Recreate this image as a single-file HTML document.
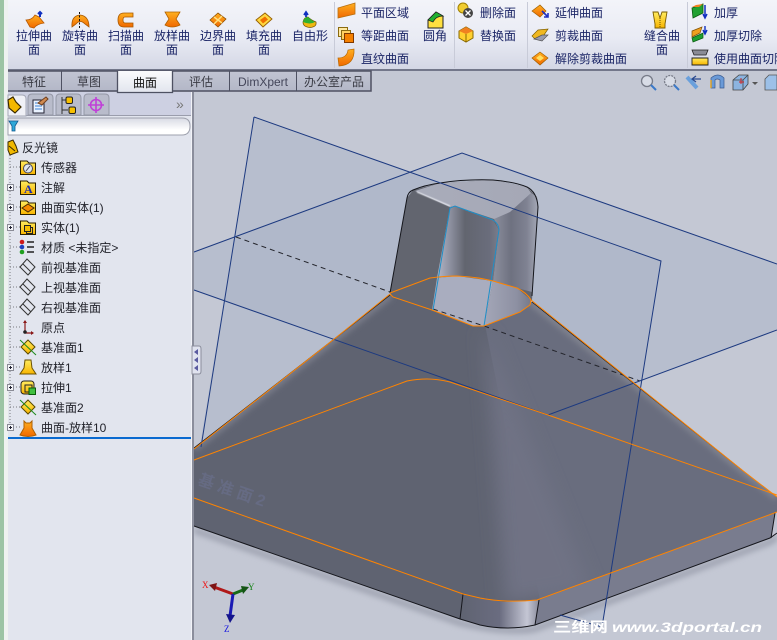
<!DOCTYPE html>
<html><head><meta charset="utf-8">
<style>
html,body{margin:0;padding:0;background:#c4c8d4;overflow:hidden}
svg{display:block}
text{font-family:"WenQuanYi Zen Hei","Liberation Sans","Noto Sans CJK SC",sans-serif;font-size:12px}
.r{fill:#1b2566;text-anchor:middle}
.l{fill:#1b2566}
.t{fill:#22232b}
.tb{fill:#3a3b44;text-anchor:middle}
</style></head><body>
<svg xmlns="http://www.w3.org/2000/svg" width="777" height="640" viewBox="0 0 777 640">
<defs>
<linearGradient id="rib" x1="0" y1="0" x2="0" y2="1"><stop offset="0" stop-color="#f3f4f9"/><stop offset=".55" stop-color="#e9ebf4"/><stop offset="1" stop-color="#d4d7e5"/></linearGradient>
<linearGradient id="tabg" x1="0" y1="0" x2="0" y2="1"><stop offset="0" stop-color="#c2c5d3"/><stop offset="1" stop-color="#b3b7c7"/></linearGradient>
<linearGradient id="act" x1="0" y1="0" x2="0" y2="1"><stop offset="0" stop-color="#fafbfd"/><stop offset="1" stop-color="#e2e5ee"/></linearGradient>
<linearGradient id="or" x1="0" y1="0" x2="0" y2="1"><stop offset="0" stop-color="#ffb020"/><stop offset="1" stop-color="#f06800"/></linearGradient>
<linearGradient id="ye" x1="0" y1="0" x2="0" y2="1"><stop offset="0" stop-color="#ffec60"/><stop offset="1" stop-color="#f8b400"/></linearGradient>
<linearGradient id="filt" x1="0" y1="0" x2="0" y2="1"><stop offset="0" stop-color="#d8dae4"/><stop offset=".7" stop-color="#ffffff"/></linearGradient>
<linearGradient id="mid" x1="0" y1="0" x2="1" y2="0"><stop offset="0" stop-color="#b4b6c6"/><stop offset=".2" stop-color="#8f92a2"/><stop offset=".45" stop-color="#62656f"/><stop offset=".85" stop-color="#6a6d7c"/><stop offset="1" stop-color="#7a7d8c"/></linearGradient>
<linearGradient id="rgt" x1="0" y1="0" x2="1" y2="0"><stop offset="0" stop-color="#8d909e"/><stop offset=".4" stop-color="#6e7180"/><stop offset=".75" stop-color="#7f8292"/><stop offset="1" stop-color="#a5a8b6"/></linearGradient>
<linearGradient id="rl" x1="0" y1="0" x2="1" y2="0"><stop offset="0" stop-color="#a4a7b8"/><stop offset=".7" stop-color="#8d90a2"/><stop offset="1" stop-color="#767989"/></linearGradient>
<linearGradient id="top" x1="0" y1="0" x2="1" y2="0"><stop offset="0" stop-color="#a9acba"/><stop offset="1" stop-color="#a5a8b6"/></linearGradient>
<linearGradient id="cor" x1="0" y1="0" x2="1" y2="0"><stop offset="0" stop-color="#5f6371"/><stop offset=".5" stop-color="#6a6c80"/><stop offset=".85" stop-color="#c4c6d4"/><stop offset="1" stop-color="#8a8c9c"/></linearGradient>
<filter id="b3" x="-20%" y="-20%" width="140%" height="140%"><feGaussianBlur stdDeviation="3"/></filter>
<filter id="b9" x="-30%" y="-30%" width="160%" height="160%"><feGaussianBlur stdDeviation="9"/></filter>
<filter id="b05"><feGaussianBlur stdDeviation=".5"/></filter>
<clipPath id="bodyc"><path d="M194,448 L333,340 L390,295 L532,302 L742,470 L777,497 L777,533 L770,538 L535,625 Q507,630 480,625 L460,619 L194,526 Z"/></clipPath>
</defs>

<!-- viewport background -->
<rect x="0" y="70" width="777" height="570" fill="#c4c8d4"/>
<polygon points="254,117 661,261 602,627 200,445" fill="#a4b0c6" opacity=".4"/>
<polygon points="194,252 462,153 777,264 777,330 548,415 194,290" fill="#a4b0c6" opacity=".4"/>

<!-- shadow -->
<path d="M194,530 L460,623 Q507,634 535,629 L770,542 L777,537" fill="none" stroke="#9ea2b0" stroke-width="6" filter="url(#b3)"/>

<!-- body -->
<path d="M194,448 L333,340 L390,295 L532,302 L742,470 L777,497 L777,533 L770,538 L535,625 Q507,630 480,625 L460,619 L194,526 Z" fill="#5f6371"/>
<g clip-path="url(#bodyc)">
<polygon points="485,325 532,302 777,497 777,515 540,600" fill="#696d7e"/>
<polygon points="484,325 505,604 590,590" fill="#6f7284" filter="url(#b9)"/>
<path d="M194,448 L390,295" stroke="#7a7d8a" stroke-width="8" filter="url(#b3)"/>
<path d="M532,302 L777,497" stroke="#80838f" stroke-width="8" filter="url(#b3)"/>
<polygon points="539,600 777,512 777,535 535,627" fill="#797c8e"/>
<polygon points="463,594 480,598 503,602 539,600 535,627 507,632 460,620" fill="url(#cor)"/>
<polygon points="771,538 775,513 777,512 777,536" fill="#c0c2d0"/>
</g>

<!-- neck -->
<path d="M390,293 L407,198 L413,190 L440,183 L493,180 L527,187 L537,197 L538,207 L532,300 L520,312 L484,326 L473,326 L432,310 L393,297 Z" fill="#62656f"/>
<polygon points="530,192 537,197 538,207 532,292 517,288 493,281 499,230 494,219" fill="url(#rgt)"/>
<polygon points="415,191 440,183 493,180 527,187 531,193 510,212 494,219 455,206 450,207" fill="url(#top)"/>
<polygon points="450,207 455,206 493,220 499,230 493,281 457,276 437,278" fill="url(#mid)"/>
<polygon points="437,278 457,276 493,281 484,326 473,326 432,310" fill="#a9adbf"/>
<polygon points="493,281 517,288 531,300 530,305 520,312 484,326" fill="url(#rl)"/>
<path d="M417,192 L450,206" stroke="#eef0f6" stroke-width="1.200" filter="url(#b05)"/>

<!-- black edges -->
<g fill="none" stroke="#15161c" stroke-width="1">
<path d="M390,293 L407,198 Q408,192 413,190 Q425,185 440,183 Q465,179 493,180 Q515,182 527,187 Q537,192 538,207 L532,296"/>
<path d="M194,526 L460,619 L480,625 Q507,631 535,625 L770,538 L777,533"/>
<path d="M463,594 L460,619 M539,600 L535,625 M775,513 L771,538"/>
<path d="M194,448 L333,340 L390,295 M532,302 L742,470" stroke-width=".8"/>
</g>
<path d="M236,237 L390,292 M433,309 L484,326 L640,381" fill="none" stroke="#24252c" stroke-width="1" stroke-dasharray="5 4"/>

<!-- cyan edges -->
<path d="M433,310 L450,208 L455,206 L493,220 Q499,224 499,230 L484,326" fill="none" stroke="#1f8fc8" stroke-width="1"/>

<!-- plane lines -->
<g fill="none" stroke="#1d3a80" stroke-width="1">
<path d="M254,117 L661,261 L602,627 L560,615"/>
<path d="M194,252 L462,153 L777,264"/>
<path d="M254,117 L201,447"/>
<path d="M194,290 L548,415 L777,330"/>
</g>

<!-- orange edges -->
<g fill="none" stroke="#ff8400" stroke-width="1">
<path d="M194,449 L333,340 L390,294 L393,297 L432,310 L473,326 L484,326 L520,312 L530,305 L531,300 L742,470 L777,497"/>
<path d="M390,293 L430,278 Q445,276 457,276 Q478,277 493,281 L517,288 Q527,293 531,300"/>
<path d="M194,460 L407,381 Q417,379 427,379 Q438,379 450,382 L548,415 L777,495"/>
<path d="M194,498 L463,594 L480,598 Q505,603 537,600 L777,512"/>
</g>

<!-- ghost label -->
<text transform="translate(197,484) rotate(19)" style="font-size:16px;font-weight:bold" fill="#686e88" opacity=".8" textLength="70">基准面2</text>

<!-- triad -->
<path d="M233,594 L214,587" stroke="#b01818" stroke-width="3"/>
<path d="M209,585 L217,583 L215,591Z" fill="#7e1414"/>
<path d="M233,594 L243,590" stroke="#176a17" stroke-width="3"/>
<path d="M249,587 L241,586 L243,594Z" fill="#155515"/>
<path d="M233,594 L230,616" stroke="#1a1ab4" stroke-width="3"/>
<path d="M230,623 L226,614 L235,615Z" fill="#14148c"/>
<text x="202" y="588" style="font:9px 'Liberation Serif',serif" fill="#f01010">X</text>
<text x="248" y="590" style="font:9px 'Liberation Serif',serif" fill="#108010">Y</text>
<text x="224" y="632" style="font:9px 'Liberation Serif',serif" fill="#1010e0">Z</text>

<!-- watermark -->
<text x="553" y="632" style="font-size:14px;font-weight:bold" fill="#ffffff" textLength="55" lengthAdjust="spacingAndGlyphs">三维网</text>
<text x="612" y="632" style="font:italic bold 14px 'Liberation Sans',sans-serif" fill="#ffffff" textLength="150" lengthAdjust="spacingAndGlyphs">www.3dportal.cn</text>

<!-- left strip -->
<rect x="0" y="0" width="4" height="640" fill="#9cc4a4"/>
<rect x="4" y="0" width="4" height="640" fill="#eef2f0"/>

<!-- left panel -->
<rect x="8" y="92" width="184" height="548" fill="#e2e5ee"/>
<rect x="8" y="92" width="184" height="24" fill="#cdd0e2"/>
<rect x="8" y="115" width="184" height="1" fill="#9a9dac"/>
<rect x="192" y="92" width="2" height="548" fill="#8b8e9c"/>
<rect x="191" y="92" width="1" height="548" fill="#f2f3f8"/>
<!-- panel tabs -->
<path d="M8,116 V95 H22 Q26,95 26,99 V116Z" fill="#f0f1f7" stroke="#a4a7b6"/>
<path d="M28,115 V98 Q28,94 32,94 H49 Q53,94 53,98 V115Z" fill="#b9bccb" stroke="#9497a6"/>
<path d="M56,115 V98 Q56,94 60,94 H77 Q81,94 81,98 V115Z" fill="#b9bccb" stroke="#9497a6"/>
<path d="M84,115 V98 Q84,94 88,94 H105 Q109,94 109,98 V115Z" fill="#b9bccb" stroke="#9497a6"/>
<!-- tab icons -->
<path d="M8,100 L13,97 L16,102 L21,107 L15,113 L9,108Z" fill="#f4b800" stroke="#3a2a00" stroke-width="1.200"/>
<path d="M33,100 H44 V113 H33Z" fill="#eaf2ff" stroke="#223"/><path d="M35,103 H42 M35,106 H42 M35,109 H42" stroke="#3a80d0"/>
<path d="M38,103 L46,97 L48,99 L42,105Z" fill="#d08a50" stroke="#704020"/>
<path d="M62,97 V114 M62,100 H66 M62,110 H68" stroke="#333" fill="none"/>
<rect x="66" y="97" width="6.500" height="6.500" rx="1.500" fill="#f8c000" stroke="#222"/><rect x="69" y="107" width="6.500" height="6.500" rx="1.500" fill="#f8c000" stroke="#222"/>
<circle cx="96" cy="105" r="5.500" fill="none" stroke="#c040d8" stroke-width="1.600"/><path d="M96,97 V113 M88,105 H104" stroke="#c040d8" stroke-width="1.600"/>
<text x="176" y="109" style="font:14px 'Liberation Sans',sans-serif" fill="#777">»</text>
<!-- filter -->
<path d="M8,118 H182 Q190,118 190,126 Q190,135 182,135 H8Z" fill="url(#filt)" stroke="#9ea1ad"/>
<path d="M9,121 H18 L15,126 V131 H12 V126Z" fill="#2fa8d8" stroke="#105a90" stroke-width=".8"/>

<!-- tree dotted -->
<path d="M10,155 V428" stroke="#7a7a80" stroke-dasharray="1 2" fill="none"/>
<path d="M10,167 H20 M10,187 H20 M10,207 H20 M10,227 H20 M10,247 H20 M10,267 H20 M10,287 H20 M10,307 H20 M10,327 H20 M10,347 H20 M10,367 H20 M10,387 H20 M10,407 H20 M10,427 H20" stroke="#7a7a80" stroke-dasharray="1 2" fill="none"/>
<g fill="#f4f5f9" stroke="#8a8c96">
<rect x="7.500" y="184.500" width="6" height="6"/><rect x="7.500" y="204.500" width="6" height="6"/><rect x="7.500" y="224.500" width="6" height="6"/>
<rect x="7.500" y="364.500" width="6" height="6"/><rect x="7.500" y="384.500" width="6" height="6"/><rect x="7.500" y="424.500" width="6" height="6"/>
</g>
<path d="M9,187.500 H12 M10.500,186 V189 M9,207.500 H12 M10.500,206 V209 M9,227.500 H12 M10.500,226 V229 M9,367.500 H12 M10.500,366 V369 M9,387.500 H12 M10.500,386 V389 M9,427.500 H12 M10.500,426 V429" stroke="#223"/>

<!-- tree icons -->
<path d="M8,142 L13,140 L16,146 L18,152 L10,155 L8,150Z" fill="#f0b800" stroke="#3a2a00"/>
<path d="M9,146 L15,151" stroke="#3a2a00"/>
<g stroke="#2a2000" stroke-width="1">
<path d="M20.500,161 H27 L29,163 H35.500 V174.500 H20.500Z" fill="url(#ye)"/>
<path d="M20.500,181 H27 L29,183 H35.500 V194.500 H20.500Z" fill="url(#ye)"/>
<path d="M20.500,201 H27 L29,203 H35.500 V214.500 H20.500Z" fill="url(#ye)"/>
<path d="M20.500,221 H27 L29,223 H35.500 V234.500 H20.500Z" fill="url(#ye)"/>
</g>
<circle cx="28" cy="168.500" r="4.500" fill="#dfe6ee" stroke="#445"/><path d="M26,171 L30,166" stroke="#445"/>
<text x="24" y="193" style="font:bold 12px 'Liberation Serif',serif" fill="#1a2ab0">A</text>
<path d="M22,208 L28,204 L34,208 L28,212Z" fill="#f58a00" stroke="#4a2a00"/>
<rect x="26.500" y="227.500" width="6" height="6" fill="none" stroke="#222"/><rect x="24.500" y="225.500" width="6" height="6" fill="#f8c000" stroke="#222"/>
<circle cx="22" cy="242" r="2.300" fill="#d01818"/><circle cx="22" cy="247" r="2.300" fill="#2040c0"/><circle cx="22" cy="252" r="2.300" fill="#20a020"/>
<path d="M27,242 H34 M27,247 H34 M27,252 H34" stroke="#222" stroke-width="1.500"/>
<g fill="none" stroke="#333">
<path d="M27,259 L35,267 L28,275 L20,267Z M23,264 L31,272"/>
<path d="M27,279 L35,287 L28,295 L20,287Z M23,284 L31,292"/>
<path d="M27,299 L35,307 L28,315 L20,307Z M23,304 L31,312"/>
</g>
<path d="M25,321 V333 H33" fill="none" stroke="#8a1818" stroke-width="1.200"/><path d="M25,320 L23,323 H27Z M34,333 L31,331 V335Z" fill="#8a1818"/><circle cx="25" cy="332" r="1.800" fill="#222"/>
<path d="M28,340 L35,347 L28,354 L21,347Z" fill="url(#ye)" stroke="#5a4a00"/><path d="M20,340 L36,355" stroke="#1c8a1c"/>
<path d="M25,360 H31 L32,368 L36,374 H20 L24,368Z" fill="url(#ye)" stroke="#6a5000"/>
<rect x="21" y="381" width="13" height="13" rx="3" fill="url(#ye)" stroke="#222"/><rect x="25" y="385" width="7" height="7" fill="none" stroke="#222"/><rect x="29" y="388" width="6.500" height="6.500" fill="#40c040" stroke="#0a5a0a"/>
<path d="M28,400 L35,407 L28,414 L21,407Z" fill="url(#ye)" stroke="#5a4a00"/><path d="M20,400 L36,415" stroke="#1c8a1c"/>
<path d="M24,421 L26,423 H30 L32,421 V428 L36,435 Q28,438 20,435 L24,428Z" fill="url(#or)" stroke="#b06000"/>

<!-- tree text -->
<g class="t">
<text x="22" y="152">反光镜</text>
<text x="41" y="172">传感器</text>
<text x="41" y="192">注解</text>
<text x="41" y="212">曲面实体(1)</text>
<text x="41" y="232">实体(1)</text>
<text x="41" y="252">材质 &lt;未指定&gt;</text>
<text x="41" y="272">前视基准面</text>
<text x="41" y="292">上视基准面</text>
<text x="41" y="312">右视基准面</text>
<text x="41" y="332">原点</text>
<text x="41" y="352">基准面1</text>
<text x="41" y="372">放样1</text>
<text x="41" y="392">拉伸1</text>
<text x="41" y="412">基准面2</text>
<text x="41" y="432">曲面-放样10</text>
</g>
<rect x="8" y="437" width="183" height="2" fill="#0a6ad0"/>

<!-- splitter handle -->
<path d="M192,346 H199 Q201,346 201,349 V371 Q201,374 199,374 H192Z" fill="#e0e3ef" stroke="#8b8e9c"/>
<path d="M198,349 L194,352 L198,355Z M198,357 L194,360 L198,363Z M198,365 L194,368 L198,371Z" fill="#5a5aa0"/>

<!-- ribbon -->
<rect x="8" y="0" width="769" height="69" fill="url(#rib)"/>
<rect x="8" y="69" width="769" height="2" fill="#73778a"/>
<g fill="#c8cbd8"><rect x="334" y="2" width="1" height="66"/><rect x="454" y="2" width="1" height="66"/><rect x="527" y="2" width="1" height="66"/><rect x="687" y="2" width="1" height="66"/></g>

<!-- tabs -->
<rect x="8" y="71" width="363" height="20" fill="url(#tabg)"/>
<path d="M8,71 H371 V91 H8" fill="none" stroke="#4e5162" stroke-width="1.500"/>
<path d="M61.500,71 V91 M117.500,71 V91 M172.500,71 V91 M229.500,71 V91 M296.500,71 V91" stroke="#4e5162"/>
<rect x="118" y="71" width="54" height="21" fill="url(#act)"/>
<path d="M117.500,71 V92.500 H172.500 V71" fill="none" stroke="#4e5162" stroke-width="1.300"/>
<g class="tb">
<text x="34" y="86">特征</text><text x="89" y="86">草图</text><text x="145" y="87" style="fill:#111">曲面</text><text x="201" y="86">评估</text>
<text x="263" y="86" style="font:12px 'Liberation Sans',sans-serif;fill:#44465a">DimXpert</text>
<text x="334" y="86">办公室产品</text>
</g>

<!-- ribbon text -->
<g class="r">
<text x="34" y="40">拉伸曲</text><text x="34" y="54">面</text>
<text x="80" y="40">旋转曲</text><text x="80" y="54">面</text>
<text x="126" y="40">扫描曲</text><text x="126" y="54">面</text>
<text x="172" y="40">放样曲</text><text x="172" y="54">面</text>
<text x="218" y="40">边界曲</text><text x="218" y="54">面</text>
<text x="264" y="40">填充曲</text><text x="264" y="54">面</text>
<text x="310" y="40">自由形</text>
<text x="435" y="40">圆角</text>
<text x="662" y="40">缝合曲</text><text x="662" y="54">面</text>
</g>
<g class="l">
<text x="361" y="17">平面区域</text><text x="361" y="40">等距曲面</text><text x="361" y="63">直纹曲面</text>
<text x="480" y="17">删除面</text><text x="480" y="40">替换面</text>
<text x="555" y="17">延伸曲面</text><text x="555" y="40">剪裁曲面</text><text x="555" y="63">解除剪裁曲面</text>
<text x="714" y="17">加厚</text><text x="714" y="40">加厚切除</text><text x="714" y="63">使用曲面切除</text>
</g>

<!-- ribbon large icons -->
<path d="M26,20 Q32,20 35,15 L39,17 L44,23 Q37,24 34,28 L30,27Z" fill="url(#or)" stroke="#b85800" stroke-width=".8"/>
<path d="M40,12 V17 M38,14 L40,12 L42,14" stroke="#1030c0" stroke-width="2" fill="none"/>
<path d="M72,27 Q71,16 80,15 Q89,16 89,27 L85,24 Q80,19 76,24Z" fill="url(#or)" stroke="#a85800" stroke-width=".8"/>
<path d="M79.500,12 V29" stroke="#111" stroke-dasharray="2 1.500"/>
<path d="M133,13 H124 Q118,13 118,20 Q118,27 124,27 H133 V23 H125 Q123,23 123,20 Q123,17 125,17 H133Z" fill="url(#or)" stroke="#a85800" stroke-width=".8"/>
<path d="M165,12 H180 L176,19 L180,25 Q172,29 165,25 L169,19Z" fill="url(#or)" stroke="#b06000" stroke-width=".8"/>
<path d="M210,20 L218,13 L226,19 L218,27Z" fill="url(#or)" stroke="#905000" stroke-width=".8"/><path d="M214,17 L222,23 M222,16 L214,24" stroke="#ffe080" stroke-width="1.500"/>
<path d="M256,20 L265,13 L272,19 L263,27Z" fill="#ffd840" stroke="#986000" stroke-width=".9"/><path d="M260,20 L265,16.500 L268,19.500 L263,23.500Z" fill="#f07000"/>
<path d="M303,22 Q304,17 308,17 Q311,20 316,22 Q317,27 310,27.500 Q303,27 303,22Z" fill="#f0b810" stroke="#705000" stroke-width=".7"/>
<path d="M303,22 Q304,17 308,17 Q311,20 315,22 Q310,25 303,22Z" fill="#30b030"/>
<path d="M306,17 V13 M304,15 L306,12 L308,15" stroke="#1030c0" stroke-width="1.800" fill="none"/>

<path d="M338,8 L355,3 V14 L338,18Z" fill="url(#or)" stroke="#b87010" stroke-width=".8"/>
<rect x="338.500" y="27.500" width="9" height="9" fill="#ffe8a0" stroke="#8a6a10"/><rect x="341.500" y="30.500" width="9" height="9" fill="#ffd060" stroke="#8a6a10"/><rect x="344.500" y="33.500" width="9" height="9" fill="#f58000" stroke="#803800"/>
<path d="M338,58 Q347,58 348,50 L354,49 Q355,65 339,66Z" fill="url(#or)" stroke="#b86800" stroke-width=".7"/>
<path d="M428,20 L436,12 L443,16 V28 H428Z" fill="#ffe040" stroke="#222"/><path d="M428,20 L436,12 L443,16 Q436,16 433,22Z" fill="#20b030" stroke="#222" stroke-width=".7"/>
<circle cx="463" cy="8" r="5" fill="#f0cc30" stroke="#a08000"/><circle cx="468" cy="13" r="5" fill="#444"/><path d="M465.500,10.500 L470.500,15.500 M470.500,10.500 L465.500,15.500" stroke="#fff" stroke-width="1.300"/>
<path d="M459,31 L466,27 L473,31 V38 L466,42 L459,38Z" fill="#ffd030" stroke="#8a6a00"/><path d="M459,31 L466,27 L473,31 L466,34Z" fill="#f08020"/><path d="M466,34 V42" stroke="#8a6a00"/>
<path d="M532,11 L540,5 L546,11 L540,17Z" fill="url(#or)" stroke="#a06000" stroke-width=".7"/><path d="M542,11 L548,17 M548,13 V17 H544" stroke="#2030c0" stroke-width="1.600" fill="none"/>
<path d="M532,36 L538,30 L548,29 L544,35 L535,39Z" fill="#f0b820" stroke="#806000" stroke-width=".7"/><path d="M534,39 L542,35 L548,35 L542,41Z" fill="#9a9cae" stroke="#555" stroke-width=".7"/>
<path d="M532,58 L540,52 L548,58 L540,65Z" fill="url(#or)" stroke="#a06000" stroke-width=".7"/><path d="M536,58 L540,55 L544,58 L540,61Z" fill="#ffe060"/>
<path d="M653,12 H658 L660,18 L662,12 H667 L665,24 V28 H655 V24Z" fill="url(#ye)" stroke="#7a5c00" stroke-width=".9"/><path d="M660,18 V28" stroke="#705000" stroke-dasharray="1 1"/>
<path d="M692,8 L703,4 V13 L693,18Z" fill="#20a030" stroke="#0a5a10" stroke-width=".8"/><path d="M692,7 L696,5 L703,4 L699,7Z" fill="#f08020"/>
<path d="M705,5 V17 M703,14 L705,18 L707,14" stroke="#1030c0" stroke-width="1.500" fill="none"/>
<path d="M692,31 L702,27 L700,33 L692,37Z" fill="#f0a020" stroke="#805000" stroke-width=".7"/><path d="M692,38 L703,33 L703,38 L693,42Z" fill="#20a030" stroke="#0a5a10" stroke-width=".7"/>
<path d="M705,26 V33 M703,30 L705,34 L707,30" stroke="#1030c0" stroke-width="1.400" fill="none"/>
<path d="M692,50 H708 L706,55 H694Z" fill="#8a8c96" stroke="#222" stroke-width=".8"/><path d="M692,58 H708 V65 H692Z" fill="url(#ye)" stroke="#222" stroke-width=".9"/>

<!-- heads-up icons -->
<circle cx="647" cy="81" r="5.500" fill="#d8dce6" stroke="#777b88" stroke-width="1.300"/><path d="M651,85 L656,90" stroke="#3a78c8" stroke-width="2"/>
<circle cx="670" cy="81" r="5.500" fill="#d8dce6" stroke="#777b88" stroke-width="1.300" stroke-dasharray="2 1"/><path d="M674,85 L679,90" stroke="#3a78c8" stroke-width="2"/>
<path d="M687,77 L697,88" stroke="#6aa0dc" stroke-width="4"/><path d="M693,79 H701 M696,76 L692,79 L696,82" stroke="#2a4a90" stroke-width="1.300" fill="none"/>
<path d="M711,78 Q718,72 724,78 V88 H720 V80 Q717,78 715,80 V88 H711Z" fill="#6a9ad8" stroke="#3a5a90" stroke-width=".7"/><path d="M711,80 V88" stroke="#e0a020" stroke-width="1.400"/>
<path d="M733,80 L739,75 H748 V84 L743,90 H733Z" fill="#8cb4e0" stroke="#444" stroke-width=".8"/><path d="M743,80 V90 M733,80 H743 L748,75" stroke="#444" stroke-width=".8" fill="none"/><path d="M739,82 H744 M741,78 V84" stroke="#d02020" stroke-width=".9"/>
<path d="M752,82 H758 L755,85Z" fill="#555"/>
<path d="M765,79 L769,75 H777 V90 H765Z" fill="#9cc0e8" stroke="#555" stroke-width=".8"/>
</svg>
</body></html>
